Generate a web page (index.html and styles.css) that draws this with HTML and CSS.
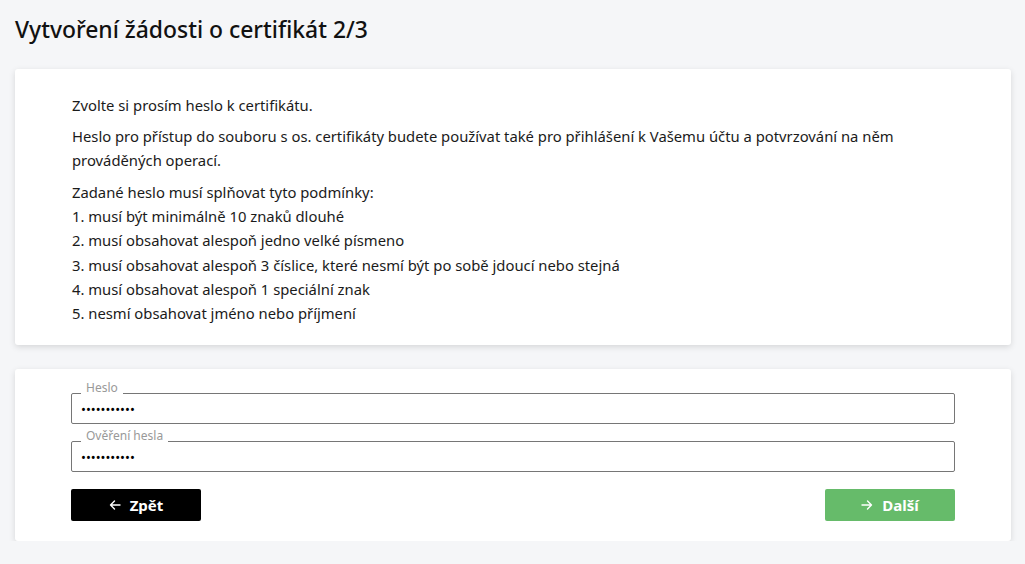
FILE: index.html
```html
<!DOCTYPE html>
<html lang="cs">
<head>
<meta charset="utf-8">
<title>Vytvoření žádosti o certifikát 2/3</title>
<link rel="stylesheet" href="styles.css">
</head>
<body>
<main class="page">
  <h1 class="title">Vytvoření žádosti o certifikát 2/3</h1>

  <section class="card info">
    <p>Zvolte si prosím heslo k certifikátu.</p>
    <p>Heslo pro přístup do souboru s os. certifikáty budete používat také pro přihlášení k Vašemu účtu a potvrzování na něm prováděných operací.</p>
    <div class="rules">
      <div>Zadané heslo musí splňovat tyto podmínky:</div>
      <div>1. musí být minimálně 10 znaků dlouhé</div>
      <div>2. musí obsahovat alespoň jedno velké písmeno</div>
      <div>3. musí obsahovat alespoň 3 číslice, které nesmí být po sobě jdoucí nebo stejná</div>
      <div>4. musí obsahovat alespoň 1 speciální znak</div>
      <div>5. nesmí obsahovat jméno nebo příjmení</div>
    </div>
  </section>

  <section class="card form">
    <label class="field">
      <span class="field-label">Heslo</span>
      <input class="field-input" type="password" value="heslo123456">
    </label>
    <label class="field">
      <span class="field-label">Ověření hesla</span>
      <input class="field-input" type="password" value="heslo123456">
    </label>
    <div class="actions">
      <button class="btn btn-back" type="button">
        <svg class="btn-icon" viewBox="0 0 12 12" width="12" height="12"><path d="M11 6H1.5M5.5 2 1.5 6l4 4" fill="none" stroke="currentColor" stroke-width="1.4" stroke-linecap="round" stroke-linejoin="round"/></svg>
        Zpět
      </button>
      <button class="btn btn-next" type="button">
        <svg class="btn-icon" viewBox="0 0 12 12" width="12" height="12"><path d="M1 6h9.5M6.5 2l4 4-4 4" fill="none" stroke="currentColor" stroke-width="1.4" stroke-linecap="round" stroke-linejoin="round"/></svg>
        Další
      </button>
    </div>
  </section>
</main>
</body>
</html>
```

FILE: styles.css
```css
* { box-sizing: border-box; }

html, body {
  margin: 0;
  padding: 0;
  background: #f5f6f8;
}

body {
  font-family: "Noto Sans", "Lato", sans-serif;
  color: #1b1b1b;
  font-size: 14.8px;
}

.page {
  padding: 0 14px 0 15px;
}

.title {
  margin: 0;
  height: 69px;
  padding-top: 16px;
  font-size: 22.9px;
  line-height: 28px;
  font-weight: 500;
  color: #111;
}

.card {
  background: #fff;
  border-radius: 3px;
  box-shadow: 0 2px 6px rgba(0, 0, 0, 0.13);
}

.info {
  padding: 24px 56px 20px 57px;
  line-height: 24px;
}

.info p {
  margin: 0 0 7px;
}

.info p + p {
  margin-bottom: 8px;
}

.rules div {
  line-height: 24.2px;
}

.form {
  margin-top: 24px;
  padding: 24px 56px 20px;
  display: flex;
  flex-direction: column;
}

.field {
  position: relative;
  display: block;
  border: 1px solid #767676;
  border-radius: 2px;
  height: 31px;
}

.field + .field {
  margin-top: 17px;
}

.field-label {
  position: absolute;
  left: 9px;
  top: -13px;
  padding: 0 5px;
  background: #fff;
  font-size: 12px;
  line-height: 13px;
  color: #999;
}

.field-input {
  display: block;
  width: 100%;
  height: 29px;
  border: 0;
  outline: none;
  background: transparent;
  padding: 0 9px;
  font-family: "Noto Sans", sans-serif;
  font-size: 13px;
  letter-spacing: 0;
  color: #000;
}

.actions {
  display: flex;
  justify-content: space-between;
  margin-top: 17px;
}

.btn {
  width: 130px;
  height: 32px;
  border: 0;
  border-radius: 2px;
  color: #fff;
  font-family: "Noto Sans", sans-serif;
  font-size: 15px;
  font-weight: 700;
  display: flex;
  align-items: center;
  justify-content: center;
  gap: 9px;
  cursor: pointer;
}

.btn-back {
  background: #000;
}

.btn-next {
  background: #66bb6a;
}

.btn-icon {
  flex: none;
}
```
